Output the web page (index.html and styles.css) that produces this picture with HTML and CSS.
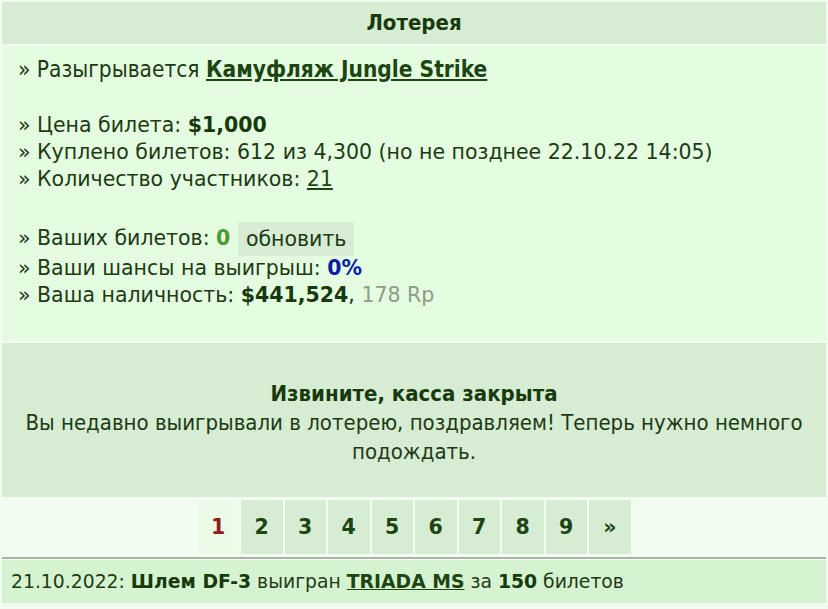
FILE: index.html
```html
<!DOCTYPE html>
<html lang="ru">
  <head>
    <meta charset="utf-8">
    <meta name="viewport" content="width=device-width, initial-scale=1.0">
    <title>Лотерея</title>
    <link rel="stylesheet" href="styles.css">
  </head>
  <body>
    <div class="lottery">
      <div class="lottery-head">Лотерея</div>
      <div class="lottery-info">
        <div class="line narrow">» Разыгрывается <a class="prize" href="#">Камуфляж Jungle Strike</a></div>
        <div class="spacer"></div>
        <div class="line">» Цена билета: <b>$1,000</b></div>
        <div class="line">» Куплено билетов: 612 из 4,300 (но не позднее 22.10.22 14:05)</div>
        <div class="line">» Количество участников: <a class="plain-link" href="#">21</a></div>
        <div class="spacer"></div>
        <div class="line button-line">» Ваших билетов: <b class="my-tickets">0</b> <button class="refresh-button">обновить</button></div>
        <div class="line">» Ваши шансы на выигрыш: <b class="chance">0%</b></div>
        <div class="line">» Ваша наличность: <b>$441,524</b>, <span class="rp">178 Rp</span></div>
      </div>
      <div class="lottery-closed">
        <div class="closed-title">Извините, касса закрыта</div>
        <div class="closed-text">Вы недавно выигрывали в лотерею, поздравляем! Теперь нужно немного подождать.</div>
      </div>
      <div class="pager">
        <span class="page current">1</span>
        <a class="page" href="#">2</a>
        <a class="page" href="#">3</a>
        <a class="page" href="#">4</a>
        <a class="page" href="#">5</a>
        <a class="page" href="#">6</a>
        <a class="page" href="#">7</a>
        <a class="page" href="#">8</a>
        <a class="page" href="#">9</a>
        <a class="page" href="#">»</a>
      </div>
      <div class="history">
        <div class="history-row">21.10.2022: <b>Шлем DF-3</b> выигран <a class="winner" href="#">TRIADA MS</a> за <b>150</b> билетов</div>
      </div>
    </div>
  </body>
</html>
```

FILE: styles.css
```css
body {
  margin: 0;
  padding: 0;
  background: #f3fcf1;
  color: #1d3a14;
  font-family: "DejaVu Sans", Verdana, sans-serif;
  font-size: 20.5px;
}
a {
  color: #1d4512;
}
b {
  color: #173a0c;
}
.lottery {
  display: flex;
  flex-direction: column;
  gap: 2px;
  padding: 2px;
}
.lottery-head {
  height: 42px;
  line-height: 42px;
  background: #d6ecd3;
  text-align: center;
  font-family: "DejaVu Sans Condensed", "DejaVu Sans", sans-serif;
  font-stretch: condensed;
  font-weight: bold;
  font-size: 22px;
  color: #173a0c;
}
.lottery-info {
  background: #e4fde0;
  height: 295px;
  box-sizing: border-box;
  padding: 10px 16px;
}
.line {
  line-height: 27px;
}
.button-line {
  height: 33px;
  line-height: 33px;
}
.spacer {
  height: 29px;
}
.narrow {
  font-family: "DejaVu Sans Condensed", "DejaVu Sans", sans-serif;
  font-stretch: condensed;
  font-size: 22.5px;
}
.prize {
  font-weight: bold;
}
.my-tickets {
  color: #4d9a2f;
}
.chance {
  color: #0a1ea3;
}
.rp {
  color: #8c9c89;
}
.refresh-button {
  border: none;
  background: #d6ecd3;
  font-family: inherit;
  font-size: 20.5px;
  line-height: 24px;
  color: #1d3a14;
  padding: 5px 8px;
  margin-left: 1px;
  vertical-align: middle;
  cursor: pointer;
}
.lottery-closed {
  background: #d6ecd3;
  height: 154px;
  display: flex;
  flex-direction: column;
  justify-content: center;
  text-align: center;
  padding: 4px 16px 0;
  box-sizing: border-box;
  font-family: "DejaVu Sans Condensed", "DejaVu Sans", sans-serif;
  font-stretch: condensed;
  font-size: 22px;
  line-height: 29px;
}
.closed-title {
  font-weight: bold;
  color: #173a0c;
}
.pager {
  display: flex;
  justify-content: center;
  gap: 2px;
  padding: 1px 0;
}
.page {
  width: 41.5px;
  height: 54px;
  line-height: 54px;
  text-align: center;
  background: #d6ecd3;
  font-weight: bold;
  font-size: 20.5px;
  color: #1d4512;
  text-decoration: none;
}
.page.current {
  background: #ebfbe8;
  color: #8e1c1c;
}
.history {
  border-top: 2px solid #a6b6a3;
  padding-top: 1px;
}
.history-row {
  background: #d6f3d1;
  height: 43px;
  line-height: 43px;
  padding: 0 9px;
  font-size: 18.8px;
}
.winner {
  font-weight: bold;
}
```
